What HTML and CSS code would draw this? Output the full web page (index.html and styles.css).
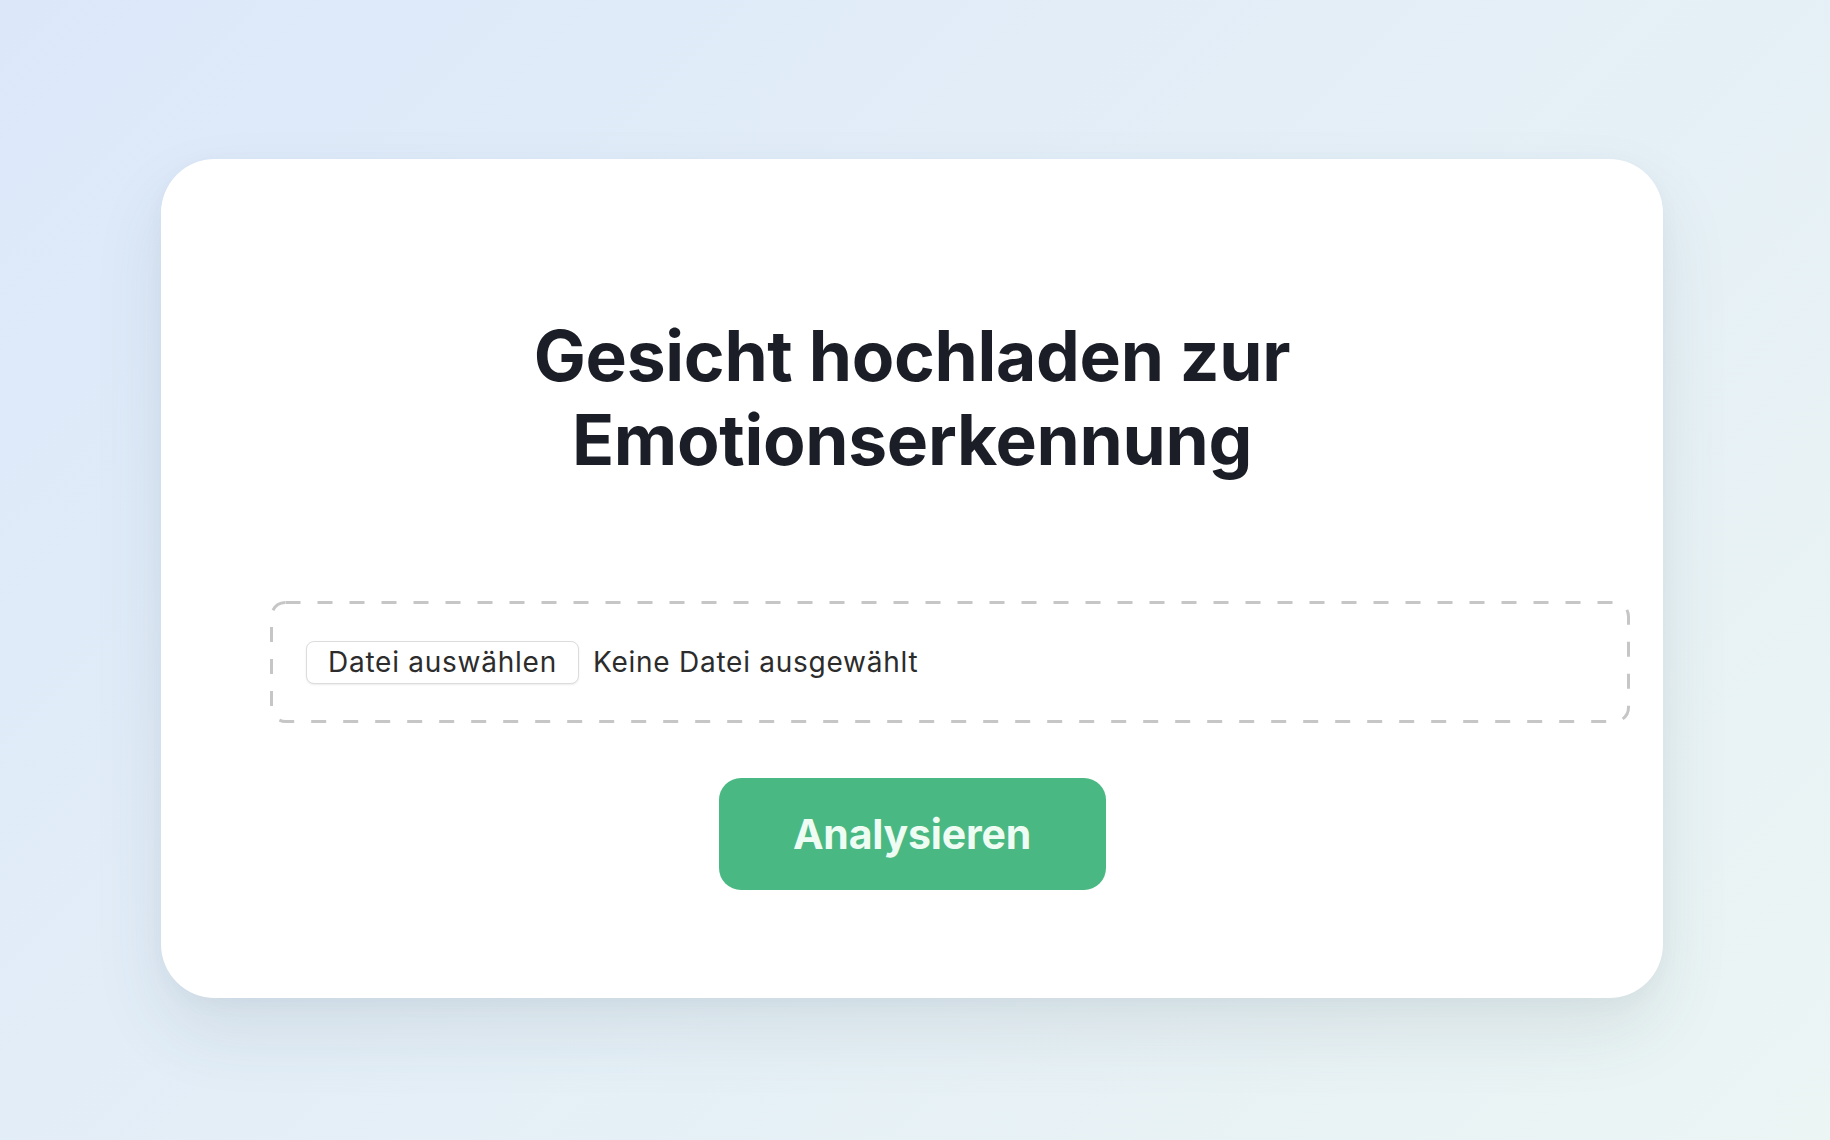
FILE: index.html
```html
<!DOCTYPE html>
<html lang="de">
<head>
<meta charset="utf-8">
<title>Emotionserkennung</title>
<link rel="stylesheet" href="styles.css">
</head>
<body>
<main class="page">
  <section class="card">
    <h1 class="title">Gesicht hochladen zur<br>Emotionserkennung</h1>
    <div class="dropzone">
      <svg class="dash" aria-hidden="true"><rect class="dash-rect" x="1.5" y="1.5" rx="14" ry="14"></rect></svg>
      <span class="file-btn">Datei auswählen</span>
      <span class="file-name">Keine Datei ausgewählt</span>
    </div>
    <button class="analyze" type="button">Analysieren</button>
  </section>
</main>
</body>
</html>
```
FILE: styles.css
```css
html, body {
  margin: 0;
  padding: 0;
}
body {
  width: 1830px;
  height: 1140px;
  overflow: hidden;
  background: linear-gradient(135deg, #dce8fa 0%, #e3eef7 45%, #ebf5f4 100%);
  font-family: Inter, "Noto Sans", sans-serif;
}
.page {
  padding-top: 159px;
  padding-left: 161px;
}
.card {
  box-sizing: border-box;
  width: 1502px;
  height: 839px;
  background: #ffffff;
  border-radius: 54px;
  box-shadow: 0 34px 70px rgba(60, 80, 90, 0.10), 0 6px 20px rgba(60, 80, 90, 0.04);
  padding: 155px 109px 0 109px;
  display: flex;
  flex-direction: column;
  align-items: center;
}
.title {
  margin: 0;
  font-family: Inter, "Noto Sans", sans-serif;
  font-weight: 700;
  font-size: 69.5px;
  line-height: 84px;
  letter-spacing: -0.3px;
  color: #1b1e27;
  text-align: center;
}
.dropzone {
  position: relative;
  box-sizing: content-box;
  align-self: flex-start;
  width: 100%;
  height: 122px;
  padding: 0 40px 0 36px;
  margin-top: 119px;
  display: flex;
  align-items: center;
  gap: 14px;
  font-family: Inter, "Noto Sans", sans-serif;
  font-size: 28px;
  letter-spacing: 0.75px;
  color: #2a2a2a;
}
.dash {
  position: absolute;
  left: 0;
  top: 0;
  width: 100%;
  height: 100%;
  pointer-events: none;
}
.dash-rect {
  width: calc(100% - 3px);
  height: calc(100% - 3px);
  fill: none;
  stroke: #c6c6c6;
  stroke-width: 3;
  stroke-dasharray: 15 17;
}
.file-btn {
  box-sizing: border-box;
  height: 43px;
  padding: 0 21px;
  display: flex;
  align-items: center;
  border: 1px solid #dcdcdc;
  border-radius: 8px;
  background: #ffffff;
  box-shadow: 0 1px 2px rgba(0, 0, 0, 0.08);
  color: #2c2c2c;
}
.file-name {
  color: #2c2c2c;
}
.analyze {
  margin-top: 55px;
  width: 387px;
  height: 112px;
  border: none;
  border-radius: 22px;
  background: #4ab882;
  color: #eefcf3;
  font-family: Inter, "Noto Sans", sans-serif;
  font-weight: 700;
  font-size: 41px;
  letter-spacing: -0.2px;
  cursor: pointer;
}
```
